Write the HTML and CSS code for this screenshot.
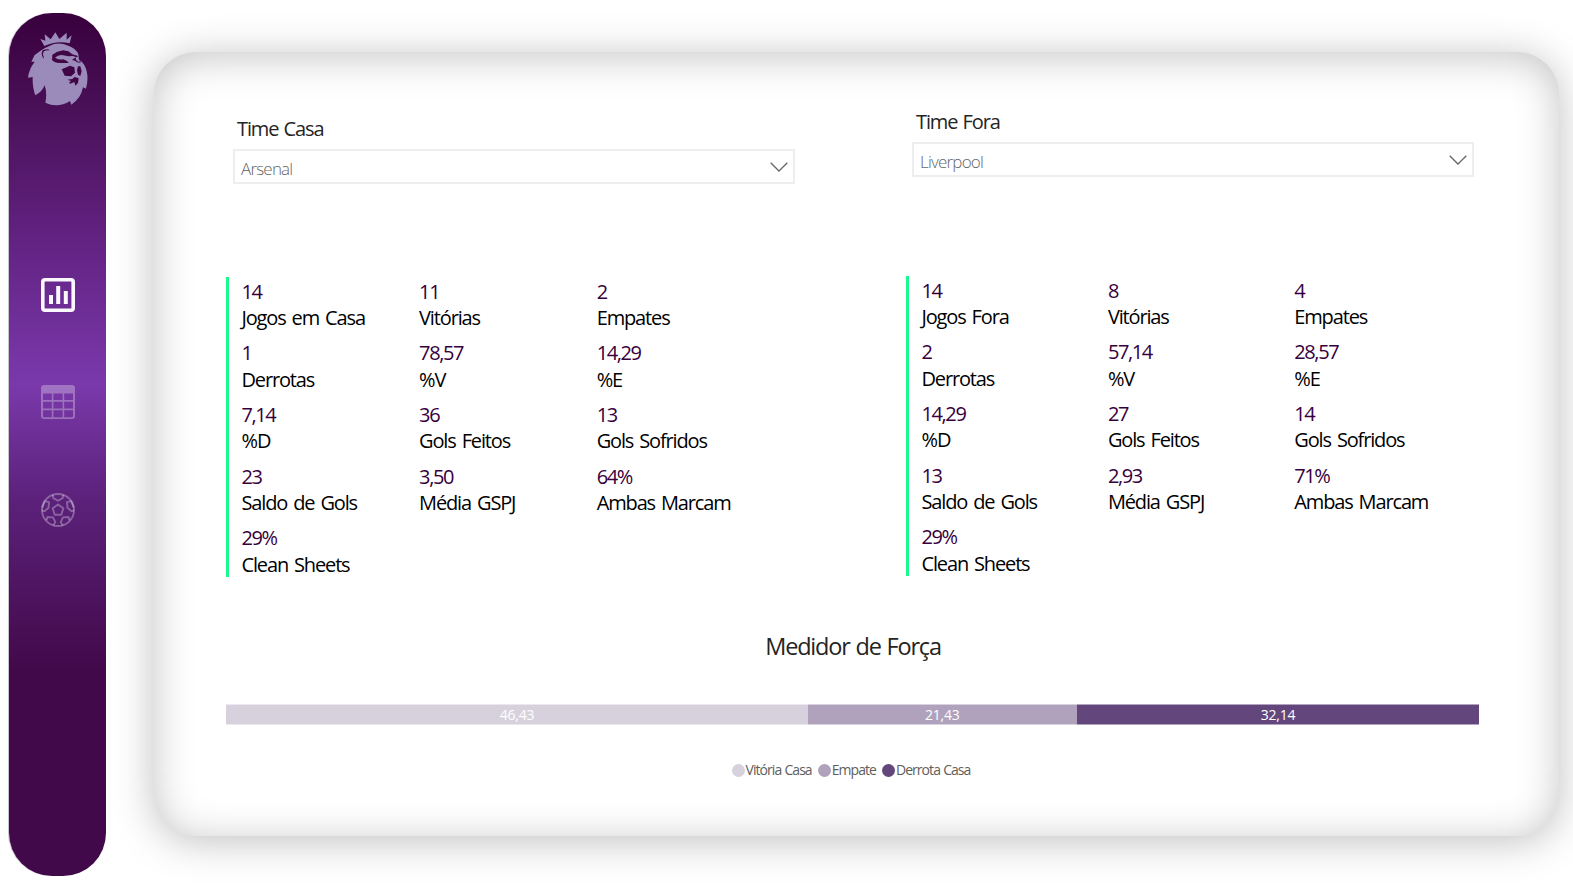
FILE: index.html
```html
<!DOCTYPE html>
<html lang="pt-BR">
<head>
<meta charset="utf-8">
<title>Medidor de Força</title>
<link rel="stylesheet" href="styles.css">
</head>
<body>
<nav class="sidebar">
  <svg class="logo" viewBox="81 93 186 228">
    <path class="lion" d="M133 138L121 117L136 122L134 103L152 118L166 97L178 117L200 98L200 119L215 106L209 130Q170 120 133 138Z"/>
    <path class="lion" d="M124 151L104 165L94 185L104 185Q87 207 84 233L98 231Q97 263 106 286Q126 276 134 256Q142 279 136 308Q173 326 210 303L214 314Q242 297 249 262L258 266Q269 225 253 195L244 184L237 180L235 163Q230 146 205 137Q174 124 148 138Q134 143 124 151Z"/>
    <path class="gap" d="M128 151Q121 163 130 175L132 173Q126 162 132 154Q139 149 149 151L145 148Q137 147 128 151ZM157 164L172 155L190 151L205 154L217 163L232 167L233 172L228 171L218 168L205 169L190 166Q175 163 165 173Q178 181 190 178L201 183L206 189L180 189Q163 189 156 180ZM216 180L227 172L228 179L234 185L243 184L241 188L231 187L225 182Z"/>
    <path class="gap" d="M185 208L210 197L223 202L225 218L213 229L194 227ZM234 199L241 199L245 214L241 228L234 224L231 211ZM202 239L217 237L224 231L236 235L234 249L226 257L223 246L211 251L207 248L213 243Z"/>
  </svg>
  <svg class="nav-icon active" viewBox="0 0 34 34">
    <rect x="1.8" y="1.8" width="30.4" height="30.4" rx="2.2" fill="none" stroke="currentColor" stroke-width="3.6"/>
    <path fill="currentColor" d="M8 17h4v9H8zM15.200 8h4v18h-4zM22.800 13h4v13h-4z"/>
  </svg>
  <svg class="nav-icon" viewBox="0 0 34 34">
    <path fill="currentColor" fill-rule="evenodd" d="M3 0H31Q34 0 34 3V31Q34 34 31 34H3Q0 34 0 31V3Q0 0 3 0ZM2 8.500V15H10.800V8.500ZM12.400 8.500V15H21.600V8.500ZM23.200 8.500V15H32V8.500ZM2 16.800V23.500H10.800V16.800ZM12.400 16.800V23.500H21.600V16.800ZM23.200 16.800V23.500H32V16.800ZM2 25.300V31Q2 32.200 3.200 32.200H10.800V25.300ZM12.400 25.300V32.200H21.600V25.300ZM23.200 25.300V32.200H30.800Q32 32.200 32 31V25.300Z"/>
  </svg>
  <svg class="nav-icon" viewBox="0 0 34 34">
    <g fill="none" stroke="currentColor" stroke-width="1.900" stroke-linejoin="round">
      <circle cx="17" cy="17" r="16"/>
      <path d="M17 11.500L22.300 15.300L20.300 21.800H13.700L11.700 15.300Z"/>
      <path d="M11.800 1.900L12.200 5L17 7.800L21.800 5L22.200 1.900"/>
      <path d="M1.200 14.500L4 8.200L8 9.200L7.500 14.800L3.500 18.200L1 17.500"/>
      <path d="M32.800 14.500L30 8.200L26 9.200L26.500 14.800L30.500 18.200L33 17.500"/>
      <path d="M5.500 27.200L6.500 24L12 24.400L14.300 29.200L12.300 32.200"/>
      <path d="M28.500 27.200L27.500 24L22 24.400L19.700 29.200L21.700 32.200"/>
    </g>
  </svg>
</nav>

<main class="card">
  <div class="teams">
    <section class="team home">
      <div class="slicer">
        <h2 class="slicer-title">Time Casa</h2>
        <div class="select"><span class="select-text">Arsenal</span>
          <svg class="chevron" viewBox="0 0 18 10"><path d="M.7.8L9 9L17.300.8"/></svg></div>
      </div>
      <dl class="stats">
        <div><dd>14</dd><dt>Jogos em Casa</dt></div>
        <div><dd>11</dd><dt>Vitórias</dt></div>
        <div><dd>2</dd><dt>Empates</dt></div>
        <div><dd>1</dd><dt>Derrotas</dt></div>
        <div><dd>78,57</dd><dt>%V</dt></div>
        <div><dd>14,29</dd><dt>%E</dt></div>
        <div><dd>7,14</dd><dt>%D</dt></div>
        <div><dd>36</dd><dt>Gols Feitos</dt></div>
        <div><dd>13</dd><dt>Gols Sofridos</dt></div>
        <div><dd>23</dd><dt>Saldo de Gols</dt></div>
        <div><dd>3,50</dd><dt>Média GSPJ</dt></div>
        <div><dd>64%</dd><dt>Ambas Marcam</dt></div>
        <div><dd>29%</dd><dt>Clean Sheets</dt></div>
      </dl>
    </section>
    <section class="team away">
      <div class="slicer">
        <h2 class="slicer-title">Time Fora</h2>
        <div class="select"><span class="select-text">Liverpool</span>
          <svg class="chevron" viewBox="0 0 18 10"><path d="M.7.8L9 9L17.300.8"/></svg></div>
      </div>
      <dl class="stats">
        <div><dd>14</dd><dt>Jogos Fora</dt></div>
        <div><dd>8</dd><dt>Vitórias</dt></div>
        <div><dd>4</dd><dt>Empates</dt></div>
        <div><dd>2</dd><dt>Derrotas</dt></div>
        <div><dd>57,14</dd><dt>%V</dt></div>
        <div><dd>28,57</dd><dt>%E</dt></div>
        <div><dd>14,29</dd><dt>%D</dt></div>
        <div><dd>27</dd><dt>Gols Feitos</dt></div>
        <div><dd>14</dd><dt>Gols Sofridos</dt></div>
        <div><dd>13</dd><dt>Saldo de Gols</dt></div>
        <div><dd>2,93</dd><dt>Média GSPJ</dt></div>
        <div><dd>71%</dd><dt>Ambas Marcam</dt></div>
        <div><dd>29%</dd><dt>Clean Sheets</dt></div>
      </dl>
    </section>
  </div>

  <section class="meter">
    <h2 class="meter-title">Medidor de Força</h2>
    <div class="bar">
      <span class="win" style="width:46.43%">46,43</span>
      <span class="draw" style="width:21.43%">21,43</span>
      <span class="loss" style="width:32.14%">32,14</span>
    </div>
    <ul class="legend">
      <li><i class="dot win"></i>Vitória Casa</li>
      <li><i class="dot draw"></i>Empate</li>
      <li><i class="dot loss"></i>Derrota Casa</li>
    </ul>
  </section>
</main>
</body>
</html>
```
FILE: styles.css
```css
* { box-sizing: border-box; margin: 0; padding: 0; }

body {
  width: 1573px;
  height: 887px;
  display: flex;
  gap: 48px;
  padding: 13px 0 0 9px;
  overflow: hidden;
  background: #fff;
  font-family: "Open Sans", "Noto Sans", sans-serif;
}

.sidebar {
  flex: none;
  width: 97px;
  height: 862.5px;
  border-radius: 43px;
  background: linear-gradient(#38003c 0%, #4e1460 14%, #612281 26%, #7a39ab 43%, #5c227c 56%, #42094a 76%);
  box-shadow: -1px 0 0 #c9c5cc;
  display: flex;
  flex-direction: column;
  align-items: center;
}
.logo { width: 62px; height: 76px; margin: 18px 0 158px; flex: none; }
.lion { fill: #9b8bba; }
.gap { fill: #410646; }
.nav-icon { width: 34px; height: 34px; margin: 13px 0 60.3px; flex: none; color: rgba(255, 255, 255, .3); }
.nav-icon.active { color: #fbf8fd; }

.card {
  flex: none;
  width: 1405px;
  height: 784px;
  margin-top: 39px;
  padding: 0 79px 0 72px;
  border-radius: 42px;
  background: #fff;
  box-shadow: 0 5px 40px rgba(0, 0, 0, .25), inset 0 5px 40px rgba(0, 0, 0, .23);
}

.teams { display: flex; gap: 111px; }
.team { width: 569px; }
.home { padding-top: 64px; }
.away { padding-top: 57px; }
.slicer { width: 562px; margin-left: 7px; }
.away .slicer { margin-left: 6px; }
.slicer-title {
  height: 33px;
  padding-left: 4px;
  line-height: 26px;
  font-size: 20px;
  font-weight: 400;
  letter-spacing: -1.1px;
  word-spacing: 1px;
  color: #252423;
}
.select {
  height: 35px;
  padding: 3px 5px 0 6px;
  border: 2px solid #eee;
  display: flex;
  align-items: center;
  justify-content: space-between;
  font-size: 17px;
  font-weight: 300;
  letter-spacing: -.8px;
  color: #666;
}
.chevron { width: 18px; height: 10px; margin-top: -2px; fill: none; stroke: #666; stroke-width: 1.3; }

.stats {
  margin-top: 93px;
  height: 300px;
  padding: 1.7px 0 0 12.5px;
  border-left: 3px solid #1afa8c;
  display: grid;
  grid-template-columns: repeat(3, 177.6px);
  grid-template-rows: repeat(5, 52.6px);
  row-gap: 9.1px;
  font-size: 20px;
  line-height: 26.3px;
  white-space: nowrap;
}
.away .stats { margin-top: 99px; grid-template-columns: repeat(3, 186.4px); }
.stats dd { color: #37003c; letter-spacing: -1.4px; }
.stats dt { color: #000; letter-spacing: -1.15px; word-spacing: 2px; }

.meter { margin-top: 52px; }
.meter-title {
  line-height: 34px;
  font-size: 23.5px;
  font-weight: 400;
  letter-spacing: -1.2px;
  word-spacing: 1px;
  text-align: center;
  color: #252423;
}
.bar { display: flex; height: 21px; margin: 41px .5px 0 0; }
.bar span {
  border: 1px solid rgba(255, 255, 255, .5);
  border-width: 1px 0;
  text-align: center;
  font-size: 14px;
  line-height: 19px;
  letter-spacing: -.2px;
  color: #fff;
}
.win { background: #d7d1de; }
.draw { background: #b0a2bd; }
.loss { background: #63467c; }

.legend {
  margin: 35px 0 0 -4px;
  display: flex;
  justify-content: center;
  gap: 6px;
  list-style: none;
  font-size: 14px;
  line-height: 20px;
  letter-spacing: -.95px;
  word-spacing: .5px;
  color: #605e5c;
}
.legend li { display: flex; align-items: center; gap: 1px; }
.dot { width: 13px; height: 13px; border-radius: 50%; }
```
